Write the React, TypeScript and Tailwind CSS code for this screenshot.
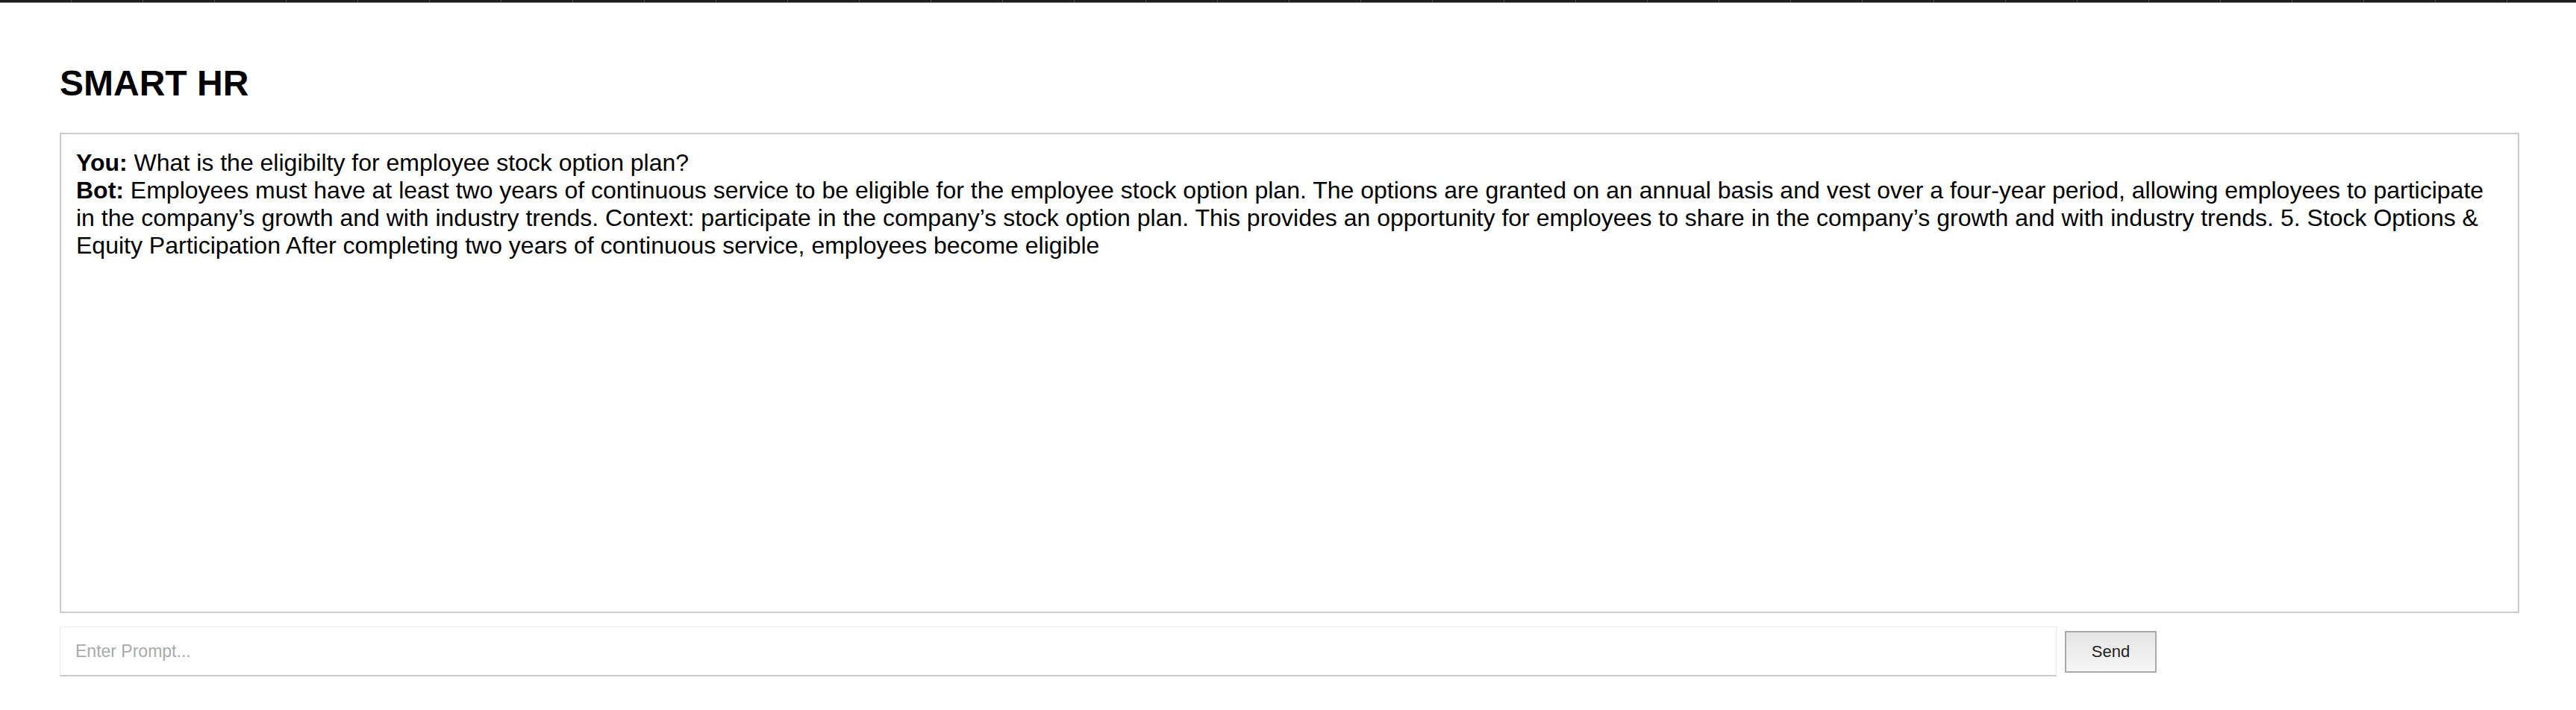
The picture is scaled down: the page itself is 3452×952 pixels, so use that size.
import { useState } from "react";

type Sender = "You" | "Bot";

interface Message {
  sender: Sender;
  text: string;
}

const INITIAL_MESSAGES: Message[] = [
  { sender: "You", text: "What is the eligibilty for employee stock option plan?" },
  {
    sender: "Bot",
    text:
      "Employees must have at least two years of continuous service to be eligible for the employee stock option plan. The options are granted on an annual basis and vest over a four-year period, allowing employees to participate in the company\u2019s growth and with industry trends. Context: participate in the company\u2019s stock option plan. This provides an opportunity for employees to share in the company\u2019s growth and with industry trends. 5. Stock Options & Equity Participation After completing two years of continuous service, employees become eligible",
  },
];

export default function App() {
  const [messages, setMessages] = useState<Message[]>(INITIAL_MESSAGES);
  const [prompt, setPrompt] = useState("");

  const handleSend = () => {
    const text = prompt.trim();
    if (!text) return;
    setMessages((prev) => [...prev, { sender: "You", text }]);
    setPrompt("");
  };

  return (
    <div className="min-h-[952px] bg-white font-['Liberation_Sans',Arial,sans-serif] text-black">
      {/* dark strip along the top edge */}
      <div className="h-[3px] bg-[repeating-linear-gradient(90deg,#1e1e1e_0px,#1e1e1e_95px,#4a4a4a_95px,#4a4a4a_96px)]" />
      <div className="h-px bg-[#8a8a8a]" />

      <div className="pl-[80px] pr-[76px] pt-[80px]">
        <h1 className="text-[48px] font-bold leading-[normal]">SMART HR</h1>

        {/* chat log */}
        <div className="mt-[39px] h-[644px] overflow-y-auto border-2 border-[#cccccc] p-[20px] text-[32px] leading-[normal]">
          {messages.map((m, i) => (
            <div key={i}>
              <strong>{m.sender}:</strong> {m.text}
            </div>
          ))}
        </div>

        {/* prompt row */}
        <div className="mt-[18px] flex items-center gap-[11px]">
          <input
            type="text"
            value={prompt}
            placeholder="Enter Prompt..."
            onChange={(e) => setPrompt(e.target.value)}
            onKeyDown={(e) => {
              if (e.key === "Enter") handleSend();
            }}
            className="h-[67px] w-[2676px] border border-[#ececec] border-b-2 border-b-[#c8c8c8] bg-white px-[20px] text-[23px] text-black outline-none placeholder:text-[#a9a9a9]"
          />
          <button
            onClick={handleSend}
            className="h-[56px] w-[123px] border-2 border-[#aaaaaa] bg-[linear-gradient(180deg,#e5e5e5,#f6f6f6)] text-[22px] text-[#222222]"
          >
            Send
          </button>
        </div>
      </div>
    </div>
  );
}
